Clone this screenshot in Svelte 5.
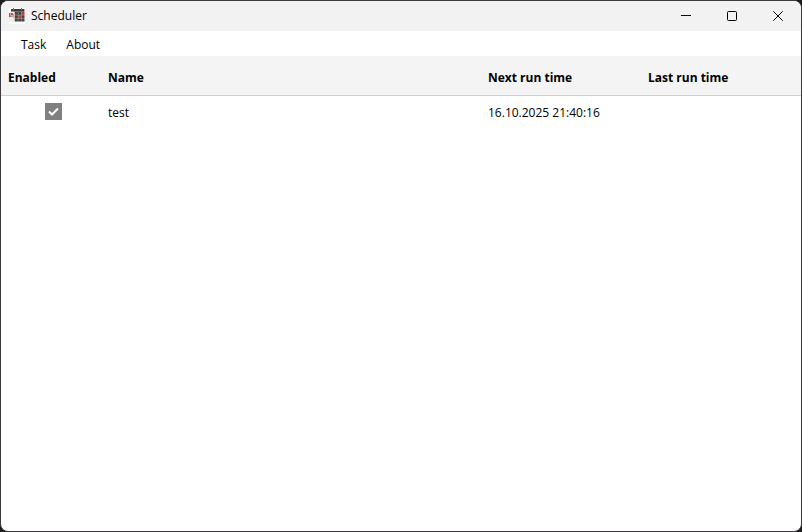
<script>
    let tasks = $state([
        { enabled: true, name: 'test', next: '16.10.2025 21:40:16', last: '' }
    ]);

    const menu = ['Task', 'About'];

    // calendar cells of the app icon: column, row, highlighted
    const cells = [
        [6, 4, 0], [9.3, 4, 0], [12.6, 4, 1],
        [6, 7.3, 0], [9.3, 7.3, 1], [12.6, 7.3, 0],
        [6, 10.6, 0], [9.3, 10.6, 0], [12.6, 10.6, 0]
    ];
</script>

<div class="window">
    <header class="titlebar">
        <svg class="app-icon" width="16" height="16" viewBox="0 0 16 16" aria-hidden="true">
            <rect width="16" height="16" fill="#fff" />
            <path d="M5 3h10.4v10.6H5z" fill="#aaa6a6" />
            <path d="M2 1h13.4v2.4H2z" fill="#3a383a" />
            <path d="M4 0h1v2H4zM12 0h1v2h-1z" fill="#777" />
            {#each cells as [x, y, marked]}
                <rect {x} {y} width="2.8" height="2.8" fill={marked ? '#b8403a' : '#454344'} />
            {/each}
            <path d="M0 4h5.4v10H0z" fill="#f3eeee" />
            <path d="M0 5h3l1 1v3H0z" fill="#83686a" />
            <path d="M1 5l4 1v4L1 8z" fill="#dc9c9a" />
            <path d="M2 5h2v2H2z" fill="#c4504e" />
        </svg>
        <span class="title">Scheduler</span>
        <div class="controls">
            <button aria-label="Minimize">
                <svg width="11" height="11" viewBox="0 0 11 11"><path d="M0 4.5h10" /></svg>
            </button>
            <button aria-label="Maximize">
                <svg width="11" height="11" viewBox="0 0 11 11"><rect x=".5" y=".5" width="9" height="9" rx="1" /></svg>
            </button>
            <button aria-label="Close">
                <svg width="11" height="11" viewBox="0 0 11 11"><path d="M.3.3l9.4 9.4M9.7.3L.3 9.7" /></svg>
            </button>
        </div>
    </header>

    <nav class="menubar">
        {#each menu as item}
            <button>{item}</button>
        {/each}
    </nav>

    <table>
        <colgroup>
            <col class="col-enabled" />
            <col class="col-name" />
            <col class="col-next" />
            <col />
        </colgroup>
        <thead>
            <tr>
                <th>Enabled</th>
                <th>Name</th>
                <th>Next run time</th>
                <th>Last run time</th>
            </tr>
        </thead>
        <tbody>
            {#each tasks as task}
                <tr>
                    <td class="check-cell">
                        <label class="check">
                            <input type="checkbox" bind:checked={task.enabled} aria-label="Enable {task.name}" />
                            {#if task.enabled}
                                <svg width="17" height="17" viewBox="0 0 17 17" aria-hidden="true">
                                    <path d="M4 8.5l3 3 6-6" />
                                </svg>
                            {/if}
                        </label>
                    </td>
                    <td>{task.name}</td>
                    <td>{task.next}</td>
                    <td>{task.last}</td>
                </tr>
            {/each}
        </tbody>
    </table>
</div>

<style>
    :global(body) {
        background: #1c1c1c;
    }

    .window {
        box-sizing: border-box;
        min-height: 100vh;
        border: 1px solid #3c3a3c;
        border-radius: 8px;
        overflow: hidden;
        background: #fff;
        color: #000;
        font-family: "Segoe UI", "Open Sans", "Noto Sans", sans-serif;
        font-size: 12px;
        line-height: 16px;
    }

    button {
        padding: 0;
        border: none;
        background: none;
        color: inherit;
        font: inherit;
    }

    .titlebar {
        display: flex;
        align-items: center;
        height: 30px;
        padding-left: 8px;
        background: #f2f2f2;
    }

    .title {
        margin-left: 6px;
    }

    .controls {
        display: flex;
        align-self: stretch;
        margin-left: auto;
    }

    .controls button {
        display: flex;
        align-items: center;
        justify-content: center;
        width: 46px;
    }

    .controls svg {
        fill: none;
        stroke: #000;
        stroke-width: 1;
    }

    .controls button:hover,
    .menubar button:hover {
        background: #e5e5e5;
    }

    .menubar {
        display: flex;
        height: 25px;
        padding: 0 10px;
    }

    .menubar button {
        padding: 2px 10px 0;
    }

    table {
        width: 100%;
        table-layout: fixed;
        border-collapse: separate;
        border-spacing: 0;
    }

    .col-enabled {
        width: 100px;
    }

    .col-name {
        width: 380px;
    }

    .col-next {
        width: 160px;
    }

    th,
    td {
        box-sizing: border-box;
        padding: 4px 0 0 7px;
        text-align: left;
        white-space: nowrap;
    }

    th {
        height: 40px;
        border-bottom: 1px solid #d0d0d0;
        background: #f4f4f4;
        font-weight: 700;
    }

    td {
        height: 32px;
        padding-top: 2px;
    }

    .check-cell {
        padding: 0 0 2px 5px;
    }

    .check {
        display: block;
        position: relative;
        width: 17px;
        height: 17px;
        margin: 0 auto;
    }

    .check input {
        display: block;
        width: 17px;
        height: 17px;
        margin: 0;
        appearance: none;
        background: #808080;
    }

    .check svg {
        position: absolute;
        inset: 0;
        fill: none;
        stroke: #fff;
        stroke-width: 2;
        pointer-events: none;
    }
</style>
